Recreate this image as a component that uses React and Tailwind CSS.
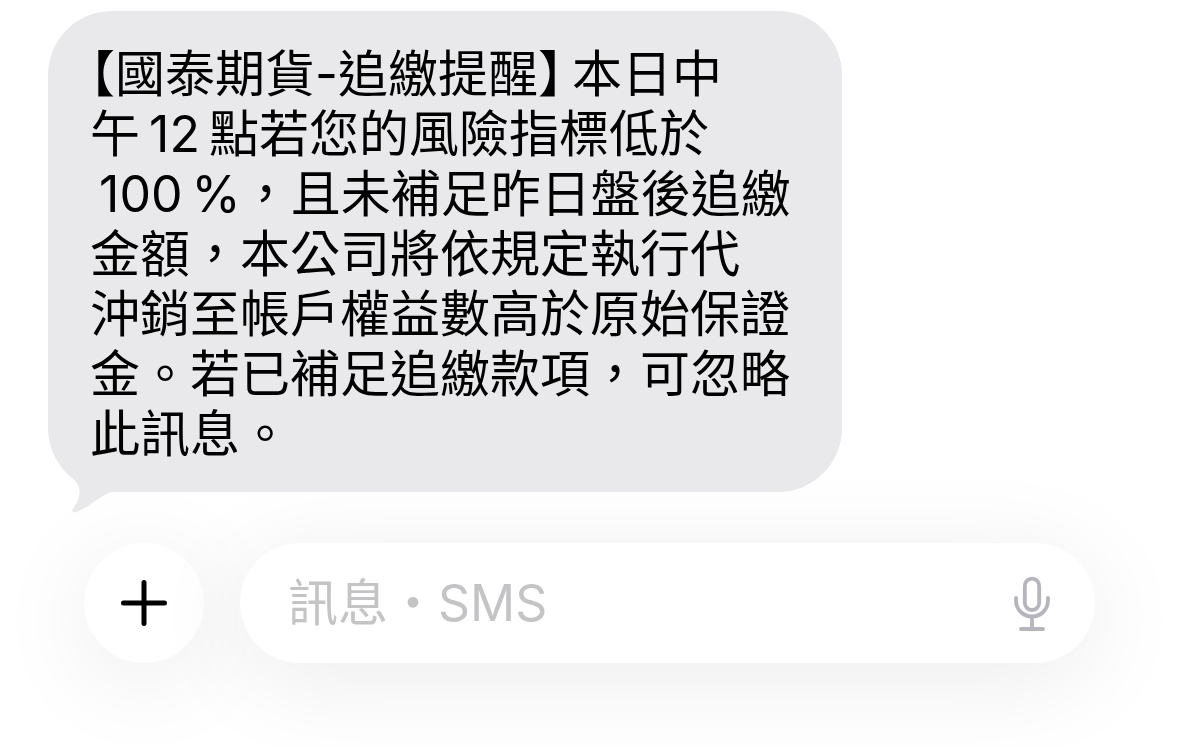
const lines = [
  "午\u200912\u2009點若您的風險指標低於",
  "\u2009100\u2009%，且未補足昨日盤後追繳",
  "金額，本公司將依規定執行代",
  "沖銷至帳戶權益數高於原始保證",
  "金。若已補足追繳款項，可忽略",
  "此訊息。",
];

const PlusIcon = () => (
  <svg viewBox="0 0 48 48" className="w-12 h-12" fill="none" stroke="currentColor" strokeWidth="5" strokeLinecap="round" aria-hidden="true">
    <path d="M24 3.5v41M3.5 24h41" />
  </svg>
);

const MicIcon = () => (
  <svg viewBox="0 0 40 56" className="w-10 h-14" fill="none" stroke="currentColor" strokeWidth="3.8" strokeLinecap="round" aria-hidden="true">
    <rect x="12.8" y="3.6" width="14.4" height="31.4" rx="7.2" />
    <path d="M4 23v2.500a16 16 0 0 0 32 0v-2.500M20 42v11.500M9 54h22" />
  </svg>
);

const Bubble = () => (
  <article className="relative w-full max-w-[794px] rounded-[64px] bg-[#e9e9eb] pt-[33px] pb-7 pl-[42px]">
    <p className="whitespace-pre text-[50px] leading-[60px] text-black">
      <span className="[font-feature-settings:'halt']">【</span>
      國泰期貨-追繳提醒
      <span className="[font-feature-settings:'halt']">】</span>
      {"\u2009本日中"}
      {lines.map((line) => (
        <span key={line} className="block">{line}</span>
      ))}
    </p>
    {/* tail */}
    <svg viewBox="0 0 64 64" className="absolute left-3 -bottom-6 w-16 h-16" fill="#e9e9eb" aria-hidden="true">
      <path d="M8 22C15 28 19 32 19.500 38C20 45 17 51 13.500 55.500C11 58.500 13 61.500 16.500 60C27 56 36 48 44 43.500C48 41 51 40 56 40V10H8Z" />
    </svg>
  </article>
);

const Composer = () => (
  <form className="flex items-center gap-9 px-[84px]" onSubmit={(e) => e.preventDefault()}>
    <button type="button" aria-label="加入附件" className="flex size-[120px] shrink-0 items-center justify-center rounded-full bg-white text-black shadow-[0_16px_100px_rgba(0,0,0,0.08)]">
      <PlusIcon />
    </button>
    <div className="flex h-[120px] min-w-0 flex-1 items-center rounded-full bg-white pr-[43px] pl-12 shadow-[0_16px_100px_rgba(0,0,0,0.08)]">
      <input
        type="text"
        aria-label="訊息"
        placeholder="訊息・SMS"
        className="h-[72px] min-w-0 flex-1 bg-transparent text-[50px] text-black outline-none placeholder:text-[#c4c4c6]"
      />
      <button type="button" aria-label="語音輸入" className="shrink-0 text-[#b5b5bb]">
        <MicIcon />
      </button>
    </div>
  </form>
);

export default function App() {
  return (
    <main lang="zh-Hant" className="flex flex-col gap-[51px] bg-white pt-[11px] pb-[84px] font-['Inter','Noto_Sans_CJK_TC',sans-serif]">
      <section className="px-12">
        <Bubble />
      </section>
      <Composer />
    </main>
  );
}
